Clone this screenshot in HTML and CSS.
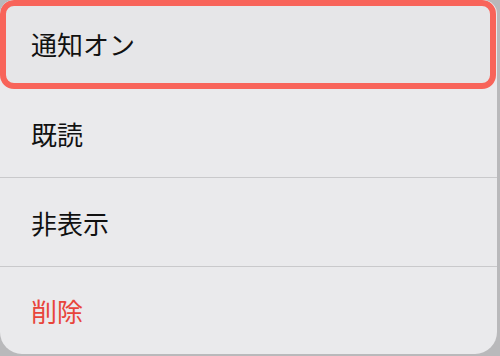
FILE: index.html
```html
<!DOCTYPE html>
<html lang="ja">
<head>
    <meta charset="UTF-8">
    <meta name="viewport" content="width=device-width, initial-scale=1.0">
    <title>メニュー</title>
    <link rel="stylesheet" href="styles.css">
</head>
<body>

    <!-- Context menu -->
    <div class="menu">
        <div class="menu-item selected">通知オン</div>
        <div class="menu-item">既読</div>
        <div class="menu-item">非表示</div>
        <div class="menu-item danger">削除</div>
    </div>

</body>
</html>
```

FILE: styles.css
```css
* {
    margin: 0;
    padding: 0;
    box-sizing: border-box;
}

body {
    font-family: "Noto Sans CJK JP", "Noto Sans", sans-serif;
    width: 500px;
    height: 356px;
    background-color: #b9b9bb;
    overflow: hidden;
}

.menu {
    width: 497px;
    height: 354px;
    background-color: #eaeaec;
    border-radius: 14px 14px 22px 22px;
    display: flex;
    flex-direction: column;
    overflow: hidden;
}

.menu-item {
    height: 89px;
    display: flex;
    align-items: center;
    padding-left: 31px;
    font-size: 26px;
    color: #111;
    border-bottom: 1px solid #c9c9cb;
}

.menu-item:last-child {
    border-bottom: none;
    flex: 1;
}

/* Highlighted row */
.menu-item.selected {
    width: 496px;
    padding-left: 25px;
    padding-bottom: 2px;
    border: 6px solid #f8645a;
    border-radius: 14px;
    background-color: #e6e6e8;
}

.menu-item.danger {
    color: #e8453b;
}
```
